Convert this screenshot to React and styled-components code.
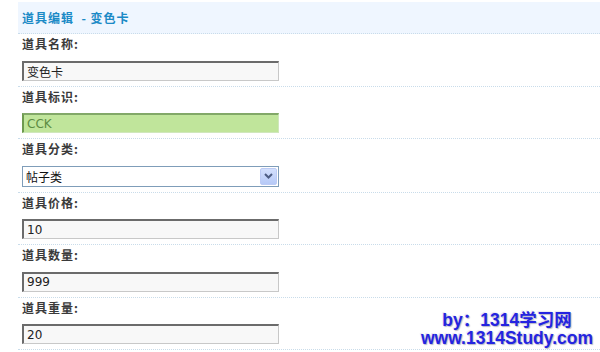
import React from "react";
import styled, { createGlobalStyle } from "styled-components";

const Global = createGlobalStyle`
  html, body { margin: 0; padding: 0; background: #fff; }
  body { font-family: "Noto Sans CJK SC", "DejaVu Sans", sans-serif; }
  #root { width: 600px; height: 352px; overflow: hidden; position: relative; }
`;

const Page = styled.div`
  padding: 2px 0 0 18px;
`;

const Header = styled.div`
  height: 31px;
  background: #eff6ff;
  border-bottom: 1px dotted #c9dcea;
  display: flex;
  align-items: center;
  padding-left: 4px;
  font-family: "Noto Sans CJK SC", sans-serif;
  font-size: 12px;
  font-weight: bold;
  letter-spacing: 1px;
  color: #1b8ac6;
`;

const Row = styled.div`
  border-bottom: 1px dotted #c9dcea;
  padding: 0 0 5px 4px;
  display: flex;
  flex-direction: column;
`;

const Label = styled.div`
  height: 26.5px;
  line-height: 20px;
  font-family: "Noto Sans CJK SC", sans-serif;
  font-size: 12px;
  font-weight: bold;
  letter-spacing: 1px;
  color: #3a3a3a;
`;

const Input = styled.div`
  box-sizing: border-box;
  width: 257px;
  height: 20px;
  padding-left: 3px;
  display: flex;
  align-items: center;
  font-family: "DejaVu Sans", "Noto Sans CJK SC", sans-serif;
  font-size: 12px;
  color: ${(p) => (p.$ok ? "#5d8c43" : "#222")};
  background: ${(p) => (p.$ok ? "#c0e59b" : "#f8f8f8")};
  border-style: solid;
  border-width: 1px;
  border-color: ${(p) =>
    p.$ok ? "#82a868 #cfe7bc #cfe7bc #6e9a50" : "#6b6b6b #c8c8c8 #c8c8c8 #6b6b6b"};
  border-top-width: 2px;
  border-left-width: 2px;
`;

const Select = styled.div`
  box-sizing: border-box;
  width: 257px;
  height: 21px;
  border: 1px solid #7f9db9;
  background: #fff;
  display: flex;
  align-items: center;
  padding: 1px;
  font-family: "Noto Sans CJK SC", sans-serif;
  font-size: 12px;
  color: #111;
`;

const SelectText = styled.span`
  flex: 1;
  padding-left: 2px;
`;

const DropBtn = styled.span`
  box-sizing: border-box;
  width: 17px;
  height: 17px;
  border: 1px solid #bccbf5;
  border-radius: 2px;
  background: linear-gradient(#d3e0fd, #b6c9f7);
  display: flex;
  align-items: center;
  justify-content: center;
`;

const Mark = styled.div`
  position: absolute;
  left: 412px;
  top: 311px;
  width: 190px;
  text-align: center;
  font-family: "Liberation Sans", "Noto Sans CJK SC", sans-serif;
  font-weight: bold;
  font-size: 17.5px;
  line-height: 18px;
  color: #2424e0;
  text-shadow: 1px 1px 1px #b8b8c8, -1px -1px 1px #e8e8f0;
`;

const rows = [
  { label: "道具名称:", value: "变色卡" },
  { label: "道具标识:", value: "CCK", ok: true },
  { label: "道具分类:", value: "帖子类", select: true },
  { label: "道具价格:", value: "10" },
  { label: "道具数量:", value: "999" },
  { label: "道具重量:", value: "20" },
];

export default function App() {
  return (
    <>
      <Global />
      <Page>
        <Header>道具编辑 &nbsp;- 变色卡</Header>
        {rows.map((r) => (
          <Row key={r.label}>
            <Label>{r.label}</Label>
            {r.select ? (
              <Select>
                <SelectText>{r.value}</SelectText>
                <DropBtn>
                  <svg width="9" height="6" viewBox="0 0 9 6">
                    <path d="M1 1 L4.5 4.5 L8 1" fill="none" stroke="#4d5d83" strokeWidth="2" />
                  </svg>
                </DropBtn>
              </Select>
            ) : (
              <Input $ok={r.ok}>{r.value}</Input>
            )}
          </Row>
        ))}
      </Page>
      <Mark>
        <div>by：1314学习网</div>
        <div>www.1314Study.com</div>
      </Mark>
    </>
  );
}
